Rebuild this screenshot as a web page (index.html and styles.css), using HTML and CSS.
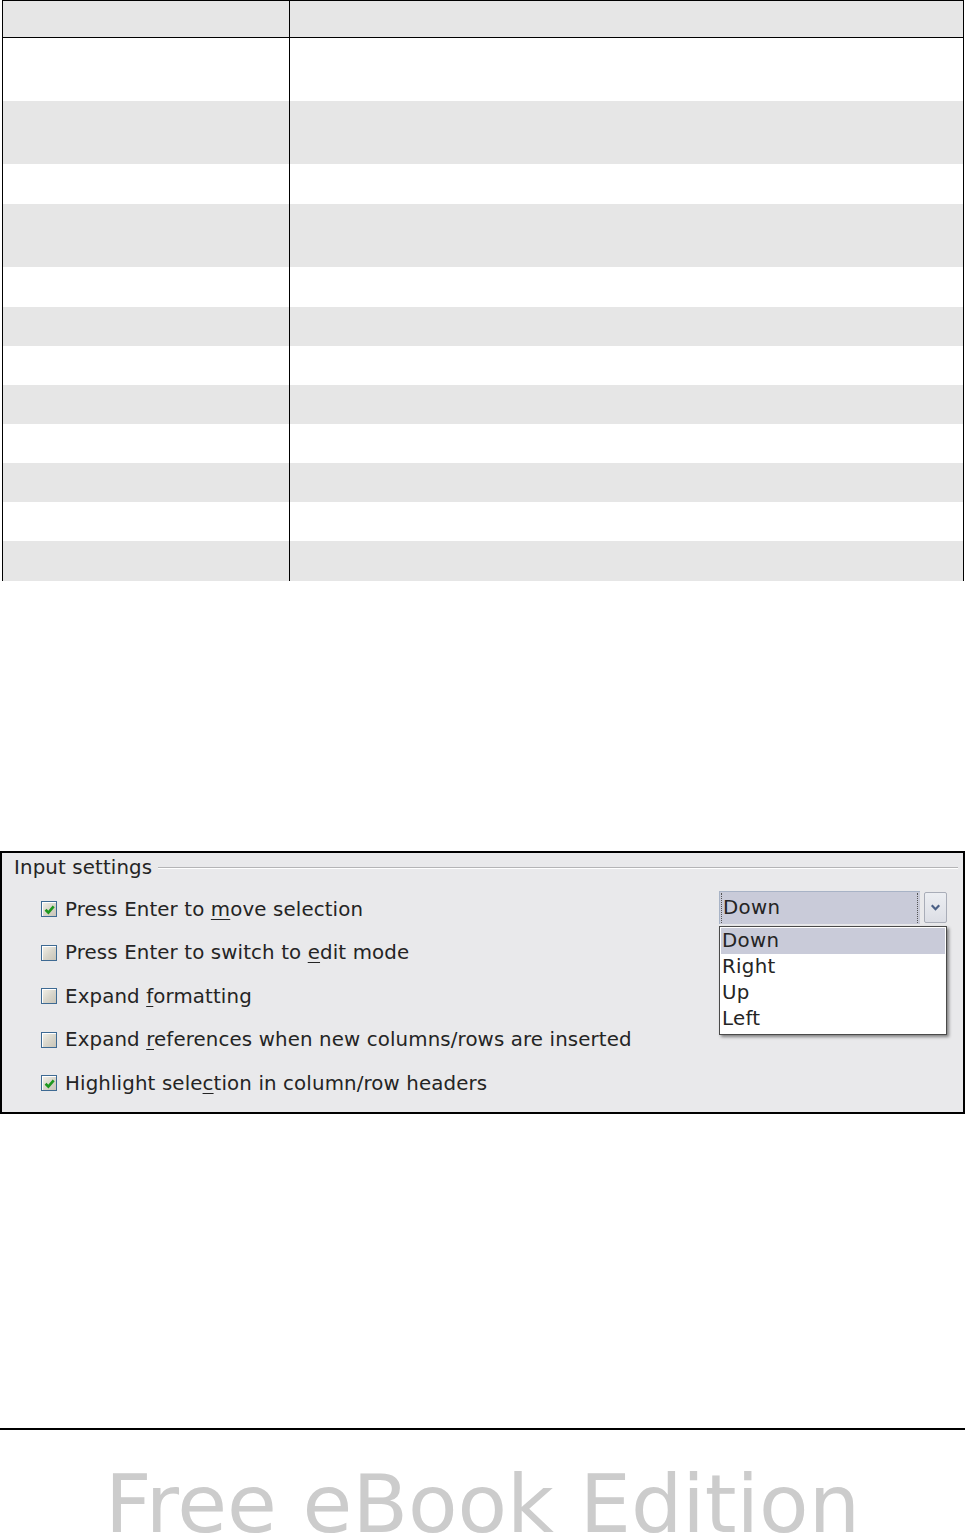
FILE: index.html
```html
<!DOCTYPE html>
<html>
<head>
<meta charset="utf-8">
<link rel="stylesheet" href="styles.css">
</head>
<body>
<div class="tbl">
  <div class="row head"><div class="c1"></div><div class="c2"></div></div>
  <div class="row h63"><div class="c1"></div><div class="c2"></div></div>
  <div class="row h63 alt"><div class="c1"></div><div class="c2"></div></div>
  <div class="row h40"><div class="c1"></div><div class="c2"></div></div>
  <div class="row h63 alt"><div class="c1"></div><div class="c2"></div></div>
  <div class="row h40"><div class="c1"></div><div class="c2"></div></div>
  <div class="row h39 alt"><div class="c1"></div><div class="c2"></div></div>
  <div class="row h39"><div class="c1"></div><div class="c2"></div></div>
  <div class="row h39 alt"><div class="c1"></div><div class="c2"></div></div>
  <div class="row h39"><div class="c1"></div><div class="c2"></div></div>
  <div class="row h39 alt"><div class="c1"></div><div class="c2"></div></div>
  <div class="row h39"><div class="c1"></div><div class="c2"></div></div>
  <div class="row h40 alt"><div class="c1"></div><div class="c2"></div></div>
</div>

<div class="dialog">
  <div class="legend"><span class="legend-text">Input settings</span><span class="groove"></span></div>
  <div class="options">
    <div class="checks">
      <div class="opt"><span class="cb on"><svg viewBox="0 0 10 10" width="11" height="11"><path d="M1.4 5.2 L4 7.8 L8.8 2.2" fill="none" stroke="#1e981e" stroke-width="2.4"/></svg></span><span>Press Enter to <u>m</u>ove selection</span></div>
      <div class="opt"><span class="cb"></span><span>Press Enter to switch to <u>e</u>dit mode</span></div>
      <div class="opt"><span class="cb"></span><span>Expand <u>f</u>ormatting</span></div>
      <div class="opt"><span class="cb"></span><span>Expand <u>r</u>eferences when new columns/rows are inserted</span></div>
      <div class="opt"><span class="cb on"><svg viewBox="0 0 10 10" width="11" height="11"><path d="M1.4 5.2 L4 7.8 L8.8 2.2" fill="none" stroke="#1e981e" stroke-width="2.4"/></svg></span><span>Highlight sele<u>c</u>tion in column/row headers</span></div>
    </div>
    <div class="combo">
      <div class="field"><span class="field-text">Down</span></div>
      <div class="btn"><svg viewBox="0 0 10 10" width="11" height="11"><path d="M1.6 3 L5 6.6 L8.4 3" fill="none" stroke="#4b6086" stroke-width="2"/></svg></div>
      <ul class="list">
        <li class="sel">Down</li>
        <li>Right</li>
        <li>Up</li>
        <li>Left</li>
      </ul>
    </div>
  </div>
</div>

<div class="footer-rule"></div>
<div class="watermark">Free eBook Edition</div>
</body>
</html>
```

FILE: styles.css
```css
html, body {
  margin: 0;
  padding: 0;
  background: #ffffff;
}
body {
  width: 965px;
  height: 1539px;
  overflow: hidden;
  font-family: "DejaVu Sans", "Liberation Sans", sans-serif;
}

/* table */
.tbl {
  margin-left: 2px;
  width: 962px;
  box-sizing: border-box;
  border-top: 1px solid #000;
  border-left: 1px solid #000;
  border-right: 1px solid #000;
}
.row {
  display: flex;
  background: #ffffff;
}
.row.alt, .row.head {
  background: #e6e6e6;
}
.row.head {
  height: 36px;
  border-bottom: 1px solid #000;
}
.h63 { height: 63px; }
.h40 { height: 40px; }
.h39 { height: 39px; }
.c1 {
  width: 287px;
  box-sizing: border-box;
  border-right: 1px solid #000;
}
.c2 { flex: 1; }

/* dialog */
.dialog {
  margin-top: 270px;
  width: 965px;
  box-sizing: border-box;
  border: 2px solid #000;
  background: #e9e9eb;
  padding: 0 0 7px 0;
  color: #242424;
  font-size: 19.8px;
  letter-spacing: 0.13px;
}
.legend {
  height: 30px;
  display: flex;
  align-items: center;
  padding-left: 12px;
  padding-right: 5px;
  margin-bottom: 4.5px;
}
.legend-text {
  line-height: 30px;
  margin-right: 6px;
}
.groove {
  flex: 1;
  border-top: 1px solid #b4b4b6;
  border-bottom: 1px solid #ffffff;
  margin-top: -1px;
}
.options {
  display: flex;
  justify-content: space-between;
  align-items: flex-start;
}
.checks {
  padding-left: 39px;
}
.opt {
  height: 43.5px;
  display: flex;
  align-items: center;
  gap: 8px;
  white-space: nowrap;
}
.opt u {
  text-decoration-thickness: 1px;
  text-underline-offset: 3px;
}
.cb {
  width: 16px;
  height: 16px;
  box-sizing: border-box;
  border: 1px solid #3e6a93;
  background: linear-gradient(135deg, #f4f2ea 0%, #d8d5ca 55%, #c9c5b8 100%);
  box-shadow: inset 1px 1px 0 #ffffff;
  display: flex;
  align-items: center;
  justify-content: center;
  flex: none;
}

/* combo */
.combo {
  position: relative;
  margin-top: 3px;
  margin-right: 16px;
  width: 228px;
  height: 33px;
  display: flex;
  gap: 4px;
}
.field {
  flex: 1;
  box-sizing: border-box;
  background: #c9cbd9;
  border-top: 1px solid #a8b3c6;
  border-left: 1px solid #a8b3c6;
  padding: 1px 2px 1px 1px;
  display: flex;
  align-items: center;
}
.field-text {
  flex: 1;
  height: 100%;
  display: flex;
  align-items: center;
  padding-left: 1px;
  border-left: 1px dotted #555;
  border-right: 1px dotted #555;
  letter-spacing: 0.3px;
}
.btn {
  width: 23px;
  box-sizing: border-box;
  margin: 1px 0 1px 0;
  background: linear-gradient(#eceef2, #dcdee5);
  border: 1px solid #a9adb8;
  border-radius: 2px;
  display: flex;
  align-items: center;
  justify-content: center;
}
.list {
  position: absolute;
  top: 35px;
  left: 0;
  width: 228px;
  box-sizing: border-box;
  margin: 0;
  padding: 1px 1px 2px 1px;
  list-style: none;
  background: #ffffff;
  border: 1px solid #4a4a4a;
  box-shadow: 2px 2px 3px rgba(0, 0, 0, 0.45);
}
.list li {
  height: 26px;
  line-height: 26px;
  padding-left: 1px;
  letter-spacing: 0.3px;
}
.list li.sel {
  background: #c9cbd9;
}

/* footer */
.footer-rule {
  margin-top: 314px;
  height: 2px;
  background: #000;
}
.watermark {
  margin-top: 28px;
  text-align: center;
  font-size: 81px;
  line-height: 92px;
  color: #cccccc;
  white-space: nowrap;
}
```
